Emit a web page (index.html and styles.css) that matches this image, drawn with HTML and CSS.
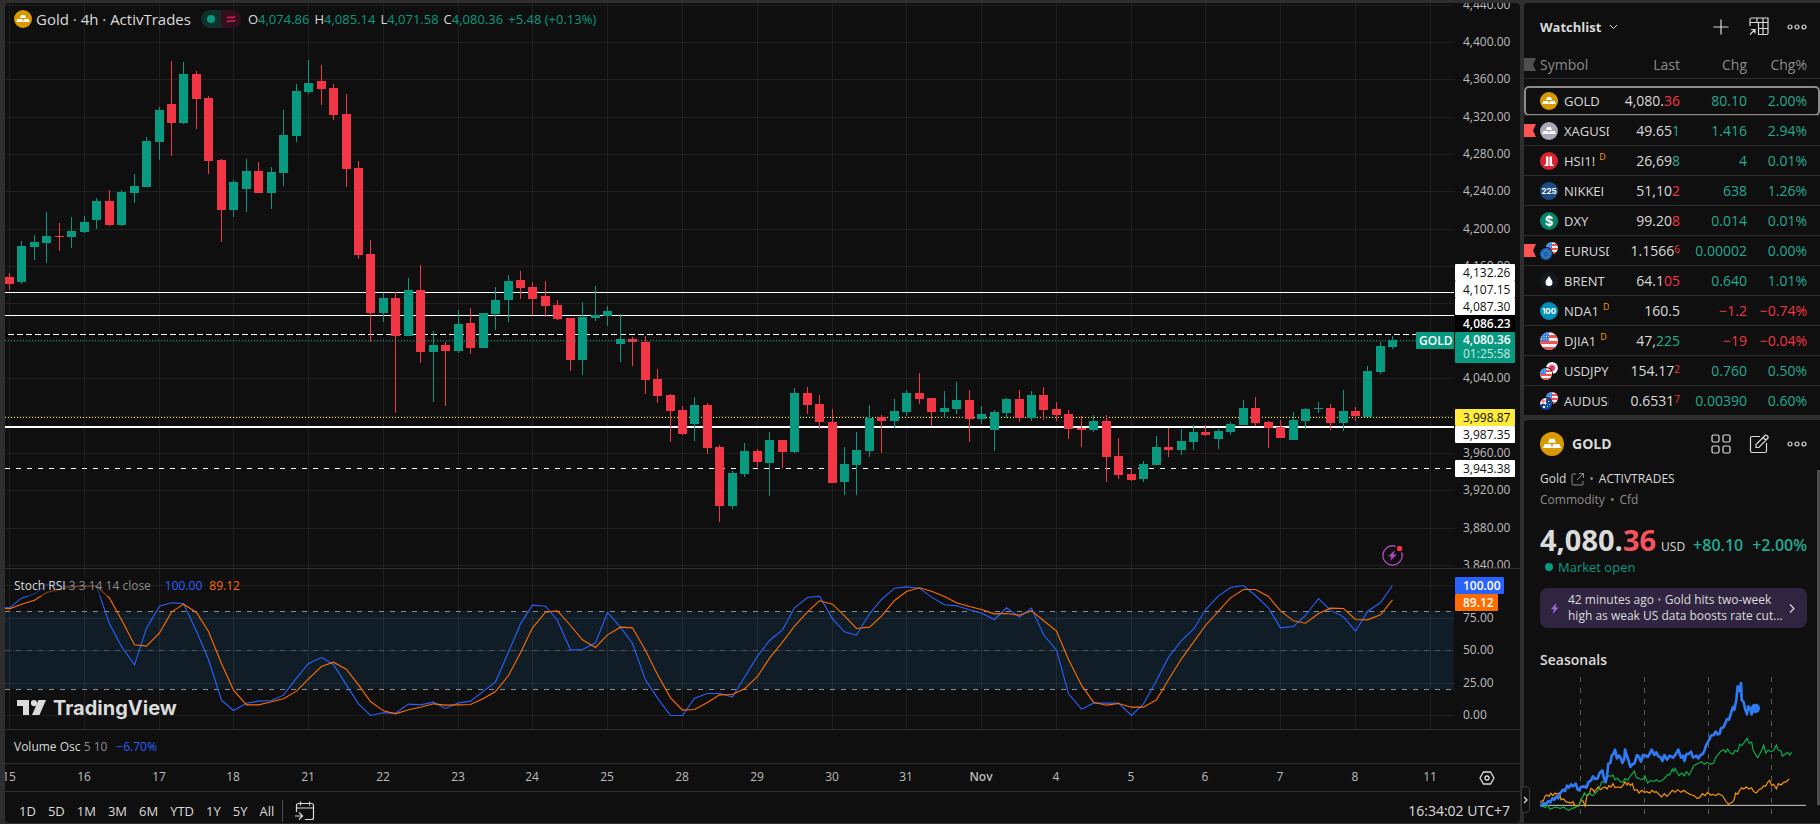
FILE: index.html
```html
<!DOCTYPE html>
<html lang="en">
<head>
<meta charset="utf-8">
<title>Gold · 4h · ActivTrades</title>
<link rel="stylesheet" href="styles.css">
</head>
<body>
<svg class="sprite" aria-hidden="true">
  <symbol id="bars-icon" viewBox="0 0 18 18"><path fill="#fff" d="M7.200 5h3.600l1.200 3H6zM3.400 9h4.700l1 3H2.200zM9.900 9h4.700l1.200 3H8.900z"/></symbol>
  <symbol id="us-flag" viewBox="0 0 18 18"><path fill="#f2f3f5" d="M0 0h18v18H0z"/><path fill="#ef5350" d="M9 3h9v3H9zM9 0h9v1H9zM0 9h18v3H0zM0 15h18v3H0z"/><path fill="#2f7de1" d="M0 0h9v9H0z"/><path stroke="#e3f2fd" stroke-dasharray="1 1.500" d="M1 2h8M1 4.500h8M1 7h8"/></symbol>
  <symbol id="more-icon" viewBox="0 0 20 8"><g fill="none" stroke="currentColor" stroke-width="1.200"><circle cx="3" cy="4" r="2"/><circle cx="10" cy="4" r="2"/><circle cx="17" cy="4" r="2"/></g></symbol>
</svg>
<div class="app">
  <main class="chart">
    <section class="pane pane-price" aria-label="Price">
      <div class="plot">
        <svg class="canvas" id="price-plot"></svg>
        <div class="legend legend-main">
          <svg class="coin coin-gold" width="18" height="18"><use href="#bars-icon"/></svg>
          <h1 class="title">Gold · 4h · ActivTrades</h1>
          <span class="status"><span class="status-open"><i class="dot"></i></span><span class="status-delay"><svg width="10" height="9" viewBox="0 0 10 9"><path fill="none" stroke="currentColor" stroke-width="1.300" d="M1 3.200C3 .2 6 4.400 9 1.500M1 7C3 4 6 8.200 9 5.300"/></svg></span></span>
          <span class="ohlc"><span>O<b>4,074.86</b></span><span>H<b>4,085.14</b></span><span>L<b>4,071.58</b></span><span>C<b>4,080.36</b></span><b>+5.48 (+0.13%)</b></span>
        </div>
      </div>
      <svg class="axis" id="price-axis"></svg>
    </section>
    <section class="pane pane-stoch" aria-label="Stoch RSI">
      <div class="plot">
        <svg class="canvas" id="stoch-plot"></svg>
        <div class="legend legend-study"><span>Stoch RSI <small>3 3 14 14 close</small></span><span class="blue">100.00</span><span class="orange">89.12</span></div>
        <div class="brand"><svg width="30" height="16" viewBox="0 0 30 16"><path fill="currentColor" d="M0 0h12v15H6V6H0zM21.500 0H29l-6.500 15H15z"/><circle cx="17" cy="3.100" r="3.100" fill="currentColor"/></svg>TradingView</div>
      </div>
      <svg class="axis" id="stoch-axis"></svg>
    </section>
    <section class="pane pane-volume" aria-label="Volume Osc">
      <div class="legend-volume"><span>Volume Osc <small>5 10</small></span><span class="blue">−6.70%</span></div>
    </section>
    <section class="pane pane-time" aria-label="Time axis">
      <div class="plot"><svg class="canvas" id="time-axis"></svg></div>
      <div class="axis axis-tools"><button class="icon" aria-label="Settings"><svg width="16" height="14" viewBox="0 0 16 14"><g fill="none" stroke="currentColor" stroke-width="1.300"><path d="M4.500 1h7L15 7l-3.500 6h-7L1 7z"/><circle cx="8" cy="7" r="2"/></g></svg></button></div>
    </section>
    <footer class="footer">
      <nav class="ranges" aria-label="Date range">
        <button>1D</button><button>5D</button><button>1M</button><button>3M</button><button>6M</button><button>YTD</button><button>1Y</button><button>5Y</button><button>All</button>
      </nav>
      <button class="icon goto" aria-label="Go to date"><svg width="20" height="20" viewBox="0 0 20 20"><path fill="none" stroke="currentColor" stroke-width="1.200" d="M1.500 11V4.500a2 2 0 0 1 2-2h13a2 2 0 0 1 2 2v12a2 2 0 0 1-2 2H10M1.500 7h17M5.500.5v4M14.500.5v4M0 15h7M4 11.500 7.500 15 4 18.500"/></svg></button>
      <button class="clock">16:34:02 UTC+7</button>
    </footer>
  </main>

  <aside class="side">
    <button class="collapse" aria-label="Collapse panel"><svg width="5" height="8" viewBox="0 0 5 8"><path fill="none" stroke="currentColor" stroke-width="1.300" d="M1 1l3 3-3 3"/></svg></button>
    <section class="card">
      <header class="bar">
        <button class="list-name">Watchlist <svg width="9" height="6" viewBox="0 0 9 6"><path fill="none" stroke="currentColor" d="M1 1l3.500 3.500L8 1"/></svg></button>
        <button class="icon" aria-label="Add symbol"><svg width="16" height="16" viewBox="0 0 16 16"><path stroke="currentColor" stroke-width="1.200" d="M8 .5v15M.5 8h15"/></svg></button>
        <button class="icon" aria-label="Table view"><svg width="20" height="19" viewBox="0 0 20 19"><path fill="none" stroke="currentColor" stroke-width="1.200" d="M1 9V2.500A1.500 1.500 0 0 1 2.500 1H19v15a1.500 1.500 0 0 1-1.500 1.500H9.500V5.500M1 5.500h18M14 5.500v12M9.500 11.500H19M8 1v4.500M14 1v4.500M1 17.500l5-5M2 12.500h4v4"/></svg></button>
        <button class="icon" aria-label="More"><svg width="20" height="8"><use href="#more-icon"/></svg></button>
      </header>
      <table class="list">
        <thead><tr><th class="sym"><i class="flag flag-off"></i>Symbol</th><th>Last</th><th>Chg</th><th>Chg%</th></tr></thead>
        <tbody>
          <tr class="selected"><td class="sym"><span class="cell"><svg class="coin coin-gold" width="18" height="18"><use href="#bars-icon"/></svg><span class="tick">GOLD</span></span></td><td>4,080.<em class="dn">36</em></td><td class="up">80.10</td><td class="up">2.00%</td></tr>
          <tr><td class="sym"><i class="flag"></i><span class="cell"><svg class="coin coin-silver" width="18" height="18"><use href="#bars-icon"/></svg><span class="tick">XAGUSD</span></span></td><td>49.65<em class="up">1</em></td><td class="up">1.416</td><td class="up">2.94%</td></tr>
          <tr><td class="sym"><span class="cell"><svg class="coin coin-red" width="18" height="18" viewBox="0 0 18 18"><path fill="#fff" d="M6 4.500h2.500v9.500H4l2-2.500zM9.500 4.500H12v7l2 2.500H9.500z"/></svg><span class="tick">HSI1!<sup>D</sup></span></span></td><td>26,69<em class="up">8</em></td><td class="up">4</td><td class="up">0.01%</td></tr>
          <tr><td class="sym"><span class="cell"><span class="coin coin-navy">225</span><span class="tick">NIKKEI</span></span></td><td>51,10<em class="dn">2</em></td><td class="up">638</td><td class="up">1.26%</td></tr>
          <tr><td class="sym"><span class="cell"><span class="coin coin-green">$</span><span class="tick">DXY</span></span></td><td>99.20<em class="dn">8</em></td><td class="up">0.014</td><td class="up">0.01%</td></tr>
          <tr><td class="sym"><i class="flag"></i><span class="cell"><span class="pair"><svg class="coin back" width="12" height="12"><use href="#us-flag"/></svg><svg class="coin front" width="12" height="12" viewBox="0 0 12 12"><path fill="#1565c0" d="M0 0h12v12H0z"/><circle cx="6" cy="6" r="3.500" fill="none" stroke="#ffd54f" stroke-dasharray="1 1.750"/></svg></span><span class="tick">EURUSD</span></span></td><td>1.1566<em class="dn pip">6</em></td><td class="up">0.00002</td><td class="up">0.00%</td></tr>
          <tr><td class="sym"><span class="cell"><svg class="coin coin-black" width="18" height="18" viewBox="0 0 18 18"><path fill="#fff" d="M9 4c2 3 3.500 4.500 3.500 6.500a3.500 3.500 0 0 1-7 0C5.500 8.500 7 7 9 4z"/></svg><span class="tick">BRENT</span></span></td><td>64.1<em class="dn">05</em></td><td class="up">0.640</td><td class="up">1.01%</td></tr>
          <tr><td class="sym"><span class="cell"><span class="coin coin-cyan">100</span><span class="tick">NDA1<sup>D</sup></span></span></td><td>160.5</td><td class="dn">−1.2</td><td class="dn">−0.74%</td></tr>
          <tr><td class="sym"><span class="cell"><svg class="coin" width="18" height="18"><use href="#us-flag"/></svg><span class="tick">DJIA1<sup>D</sup></span></span></td><td>47,<em class="up">225</em></td><td class="dn">−19</td><td class="dn">−0.04%</td></tr>
          <tr><td class="sym"><span class="cell"><span class="pair"><svg class="coin back" width="12" height="12" viewBox="0 0 12 12"><path fill="#eceff1" d="M0 0h12v12H0z"/><circle cx="6" cy="6" r="3" fill="#f23655"/></svg><svg class="coin front" width="12" height="12"><use href="#us-flag"/></svg></span><span class="tick">USDJPY</span></span></td><td>154.17<em class="dn pip">2</em></td><td class="up">0.760</td><td class="up">0.50%</td></tr>
          <tr><td class="sym"><span class="cell"><span class="pair"><svg class="coin back" width="12" height="12"><use href="#us-flag"/></svg><svg class="coin front" width="12" height="12" viewBox="0 0 12 12"><path fill="#0d47a1" d="M0 0h12v12H0z"/><path stroke="#fff" stroke-width="2" d="M0 0l6 6M6 0L0 6M3 0v6M0 3h6"/><path stroke="#ef5350" d="M3 0v6M0 3h6"/><path fill="#fff" d="M8 3h1v1H8zM9 6h1v1H9zM7 8h1v1H7zM3 8h2v2H3z"/></svg></span><span class="tick">AUDUSD</span></span></td><td>0.6531<em class="dn pip">7</em></td><td class="up">0.00390</td><td class="up">0.60%</td></tr>
        </tbody>
      </table>
    </section>

    <section class="card details">
      <div class="scroll"></div>
      <header class="bar">
        <svg class="coin coin-gold" width="24" height="24"><use href="#bars-icon"/></svg>
        <h2 class="name">GOLD</h2>
        <button class="icon" aria-label="Widgets"><svg width="20" height="20" viewBox="0 0 20 20"><g fill="none" stroke="currentColor" stroke-width="1.200"><rect x="1" y="1" width="7" height="7" rx="1.500"/><rect x="12" y="1" width="7" height="7" rx="1.500"/><rect x="1" y="12" width="7" height="7" rx="1.500"/><rect x="12" y="12" width="7" height="7" rx="1.500"/></g></svg></button>
        <button class="icon" aria-label="Edit note"><svg width="20" height="20" viewBox="0 0 20 20"><g fill="none" stroke="currentColor" stroke-width="1.200"><path d="M11 2.500H3A1.500 1.500 0 0 0 1.500 4v13A1.500 1.500 0 0 0 3 18.500h13a1.500 1.500 0 0 0 1.500-1.500V9"/><path d="M7 13.500V10.500L16 1.500a1.400 1.400 0 0 1 2 0l.8.8a1.400 1.400 0 0 1 0 2l-9 9.200zM14 3.500l3 3"/></g></svg></button>
        <button class="icon" aria-label="More"><svg width="20" height="8"><use href="#more-icon"/></svg></button>
      </header>
      <p class="meta"><span>Gold</span><a class="ext" href="#gold" aria-label="Open Gold"><svg width="13" height="13" viewBox="0 0 13 13"><path fill="none" stroke="currentColor" d="M5 1H2a1 1 0 0 0-1 1v9a1 1 0 0 0 1 1h9a1 1 0 0 0 1-1V8M8 .5h4.500V5M12.500.5 6 7"/></svg></a><span class="bullet">•</span><span>ACTIVTRADES</span></p>
      <p class="meta muted"><span>Commodity</span><span class="bullet">•</span><span>Cfd</span></p>
      <p class="quote"><span class="price">4,080.<em>36</em></span><span class="cur">USD</span><span class="delta">+80.10</span><span class="delta pct">+2.00%</span></p>
      <p class="market"><i class="dot"></i>Market open</p>
      <button class="news">
        <svg width="9" height="11" viewBox="0 0 9 11"><path fill="#9c6ade" d="M6.500 0 1 6h3L2.500 11 8.500 4.500h-3z"/></svg>
        <span class="news-text">42 minutes ago <span class="bullet">•</span> Gold hits two-week high as weak US data boosts rate cut...</span>
        <svg width="6" height="9" viewBox="0 0 6 9"><path fill="none" stroke="currentColor" stroke-width="1.200" d="M1 .5l4 4-4 4"/></svg>
      </button>
      <h3 class="subhead">Seasonals</h3>
      <svg class="seasonals" viewBox="75 144 798 414">
        <g fill="none">
          <path stroke="#5a5a5a" stroke-width="3" stroke-dasharray="15 18" d="M196.500 144v414M388.500 144v414M580.500 144v414M769.500 144v414"/>
          <path stroke="#d0d0d0" stroke-width="3" d="M75 529h798"/>
          <polyline stroke="#ff9800" stroke-width="3.500" points="75,522 80,516 85,515 90,502 96,498 102,502 108,493 114,500 120,492 126,496 134,491 138,512 146,510 152,518 160,520 168,522 174,518 180,530 190,532 198,514 204,516 210,531 216,500 222,496 228,478 234,482 238,490 244,480 250,474 256,482 264,476 270,474 276,480 282,470 288,474 294,464 300,476 308,474 318,476 326,466 330,458 336,468 340,462 346,470 352,464 358,484 366,482 372,492 380,484 388,490 396,488 404,492 412,484 418,490 424,488 432,496 440,504 448,494 456,502 464,494 472,484 480,490 488,482 498,490 506,484 514,490 522,494 530,498 538,500 546,508 554,506 562,494 570,500 578,490 586,498 594,496 602,500 610,494 618,498 624,502 632,516 640,526 646,522 652,520 658,510 662,492 668,496 674,484 680,476 686,480 694,474 702,480 710,476 716,488 724,492 732,482 740,478 746,470 752,472 758,460 764,454 770,470 776,466 784,480 790,464 798,468 806,460 814,458 822,450"/>
          <polyline stroke="#0cae4a" stroke-width="3.500" points="75,532 84,532 90,536 98,528 104,540 112,538 120,534 128,536 136,538 146,534 154,540 162,544 170,538 180,536 190,530 196,520 202,506 208,492 214,500 224,492 232,500 240,494 248,486 254,474 260,458 266,460 272,452 276,446 282,440 288,442 294,438 300,452 308,448 316,458 324,460 330,448 338,454 344,444 352,434 358,426 364,446 370,448 380,452 386,448 390,440 398,462 408,454 416,458 424,452 432,458 442,454 452,444 458,436 464,438 472,420 476,428 480,418 486,430 492,440 500,432 508,440 514,428 522,438 530,424 536,410 544,406 552,402 560,398 568,406 576,400 586,406 596,402 602,386 610,376 618,366 626,362 632,370 638,360 646,372 654,376 660,364 668,368 674,346 680,350 688,340 696,328 702,342 710,340 714,362 720,374 728,386 734,376 740,364 746,348 752,372 760,364 768,368 776,364 784,348 790,364 798,366 802,382 810,376 818,370 824,378 830,370"/>
          <polyline stroke="#2f7bf6" stroke-width="8" stroke-linejoin="round" points="76,532 86,522 92,526 100,516 106,520 112,508 118,512 124,502 130,508 136,492 144,482 150,486 156,470 162,476 168,466 174,472 182,464 188,482 192,484 198,474 208,472 214,476 220,460 228,454 234,442 240,450 248,448 254,432 262,424 266,444 272,460 276,440 280,404 286,402 290,380 296,374 300,362 306,388 312,380 318,388 322,402 328,390 330,362 334,376 340,392 346,414 352,406 358,404 366,378 372,384 378,398 384,378 392,380 398,384 404,374 410,362 418,378 424,370 430,382 436,384 442,396 448,378 456,392 464,380 474,386 482,376 490,362 498,386 504,380 508,396 514,376 522,374 528,368 534,386 544,380 550,388 556,378 562,376 568,366 572,352 578,340 584,330 588,320 596,318 602,308 608,316 614,314 618,298 626,294 632,280 636,270 642,272 648,252 654,234 658,242 664,212 668,172 674,186 678,162 680,212 686,220 690,238 696,256 700,232 706,240 710,256 714,240 722,238"/>
          <circle cx="721" cy="238" r="14" fill="#2f7bf6"/>
        </g>
      </svg>
    </section>
  </aside>
</div>
<script src="chart.js"></script>
</body>
</html>
```
FILE: styles.css
```css
:root {
  --bg: #0f0f0f;
  --gap: #2e2e2e;
  --text: #dbdbdb;
  --muted: #8c8c8c;
  --green: #089981;
  --red: #f23645;
  --blue: #2962ff;
  --orange: #ff6d00;
}
* { box-sizing: border-box; }
html, body { height: 100%; }
body {
  margin: 0;
  background: var(--gap);
  color: var(--text);
  font: 14px/20px "Trebuchet MS", "Open Sans", "Noto Sans", sans-serif;
}
h1, h2, h3, p { margin: 0; font-size: inherit; font-weight: inherit; }
button { padding: 0; border: 0; background: none; color: inherit; font: inherit; cursor: pointer; }
em, i { font-style: normal; }
svg { display: block; }
.sprite { position: absolute; width: 0; height: 0; }
.app { display: grid; grid-template-columns: minmax(0, 1fr) 296px; gap: 4px; min-height: 100vh; padding: 3px 0 1px 5px; }

/* chart */
.chart { display: flex; flex-direction: column; min-width: 0; background: var(--bg); border-radius: 4px; overflow: hidden; }
.pane { display: flex; flex: none; border-bottom: 1px solid var(--gap); }
.pane-price { flex: 1; }
.pane-stoch { height: 161px; }
.pane-volume { height: 34px; align-items: center; }
.pane-time { height: 28px; }
.plot { position: relative; flex: 1; min-width: 0; overflow: hidden; }
.canvas { position: absolute; inset: 0; width: 100%; height: 100%; }
.axis { flex: none; width: 66px; height: auto; overflow: hidden; }
.axis-tools { display: grid; place-items: center; }
.tick-label { fill: #bdbdbd; font-size: 12px; }
.tag-label { font-size: 12px; }
.bold { font-weight: 600; }

.legend { position: absolute; left: 9px; display: flex; align-items: center; white-space: nowrap; }
.legend-main { top: 6px; }
.title { margin-left: 4px; font-size: 15px; }
.status { display: flex; width: 40px; height: 18px; margin: 0 7px 0 10px; border-radius: 9px; overflow: hidden; }
.status span { flex: 1; display: grid; place-items: center; }
.status-open { background: #10302c; }
.status-delay { background: #34101f; color: #e91e63; }
.dot { width: 8px; height: 8px; border-radius: 50%; background: var(--green); }
.ohlc { display: flex; gap: 5px; font-size: 13px; }
.ohlc b { color: var(--green); font-weight: 400; }
.legend-study { top: 7px; gap: 7px; font-size: 12px; }
.legend-study > span:first-child { margin-right: 7px; background: rgba(15, 15, 15, .5); }
small { color: var(--muted); font-size: inherit; }
.blue { color: var(--blue); }
.orange { color: var(--orange); }
.legend-volume { display: flex; gap: 9px; padding-left: 9px; font-size: 12px; }
.brand { position: absolute; left: 12px; bottom: 9px; display: flex; align-items: center; gap: 6px; font: 700 20px/24px Inter, sans-serif; }

.footer { display: flex; flex: none; align-items: center; height: 31px; padding: 7px 10px 0 14px; }
.ranges { display: flex; gap: 12px; padding-right: 8px; border-right: 1px solid #4a4a4a; font-size: 13px; line-height: 22px; }
.goto { margin-left: 12px; }
.clock { margin-left: auto; }

/* right column */
.side { position: relative; display: flex; flex-direction: column; gap: 5px; min-width: 0; }
.card { background: var(--bg); border-radius: 4px 0 0 0; }
.bar { display: flex; align-items: center; gap: 18px; height: 47px; padding: 0 13px 0 16px; }
.bar .icon { display: grid; place-items: center; width: 20px; height: 20px; }
.list-name { display: flex; align-items: center; gap: 8px; margin-right: auto; font-size: 13px; font-weight: 700; }
.list { width: 100%; table-layout: fixed; border-collapse: separate; border-spacing: 0; }
.list th, .list td { position: relative; height: 30px; padding: 0; border-bottom: 1px solid var(--gap); text-align: right; font-weight: 400; line-height: 20px; }
.list th { height: 29px; padding-top: 2px; color: var(--muted); }
.list th.sym, .list td.sym { width: 84px; padding-left: 16px; text-align: left; }
.list th:nth-child(2) { width: 72px; }
.list th:nth-child(3) { width: 67px; }
.list th:last-child, .list td:last-child { padding-right: 13px; }
.list tbody::before { content: ""; display: block; height: 7px; }
.list tbody tr:last-child td { height: 29px; border-bottom: 0; }
.selected { outline: 2px solid var(--muted); outline-offset: -2px; border-radius: 5px; }
.flag { position: absolute; left: 0; top: 8px; width: 12px; height: 13px; background: #ff5252; clip-path: polygon(0 0, 100% 0, 75% 50%, 100% 100%, 0 100%); }
.flag-off { background: #4f4f4f; }
.cell { display: flex; align-items: center; gap: 6px; }
.tick { width: 45px; flex: none; overflow: hidden; font-size: 13px; white-space: nowrap; }
.tick sup { margin-left: 4px; color: #ff9800; font-size: 9px; line-height: 9px; }
.coin { flex: none; display: grid; place-items: center; border-radius: 50%; overflow: hidden; }
span.coin { width: 18px; height: 18px; color: #fff; font: 700 8px/18px Inter, sans-serif; }
.coin-gold { background: #d99a00; }
.coin-silver { background: #a9a8b8; }
.coin-red { background: #dc2430; }
.coin-navy { background: #1d4c86; }
span.coin-green { background: #06826b; font-size: 13px; }
.coin-black { background: #17191f; }
.coin-cyan { background: #0090bb; }
.pair { position: relative; flex: none; width: 18px; height: 18px; }
.pair .coin { position: absolute; }
.pair .back { top: 0; right: 0; }
.pair .front { bottom: 0; left: 0; box-shadow: 0 0 0 1px var(--bg); }
.up { color: #22ab94; }
.dn { color: var(--red); }
.pip { font-size: 10px; line-height: 10px; vertical-align: 3px; }

/* symbol details */
.details { position: relative; flex: 1; padding-bottom: 6px; }
.details .coin { width: 24px; height: 24px; }
.details .name { margin: 0 auto 0 -10px; font-weight: 700; }
.scroll { position: absolute; top: 50px; right: 0; bottom: 18px; width: 3px; background: #4d4d4d; }
.meta { display: flex; align-items: center; gap: 5px; padding: 2px 16px 0; font-size: 12px; line-height: 20px; }
.meta + .meta { padding-top: 1px; }
.ext { color: var(--muted); }
.bullet { color: var(--muted); }
.muted { color: var(--muted); }
.quote { display: flex; align-items: baseline; padding: 10px 13px 0 16px; white-space: nowrap; }
.price { font-size: 29px; line-height: 40px; font-weight: 700; }
.price em { color: #f7525f; }
.cur { margin-left: 5px; font-size: 12px; }
.delta { margin-left: auto; color: #22ab94; font-size: 16px; line-height: 20px; font-weight: 600; }
.pct { margin-left: 9px; }
.market { display: flex; align-items: center; gap: 5px; margin-top: -3px; padding-left: 21px; color: var(--green); font-size: 13px; line-height: 20px; }
.news { display: grid; grid-template-columns: 9px 1fr 6px; align-items: center; width: calc(100% - 29px); height: 40px; margin: 11px 13px 0 16px; padding: 0 12px 0 10px; border-radius: 8px; background: #302540; text-align: left; font-size: 12px; line-height: 16px; }
.news-text { padding-left: 9px; }
.subhead { margin: 22px 0 7px 16px; font-weight: 600; }
.seasonals { display: block; width: calc(100% - 30px); margin-left: 16px; }
.collapse { position: absolute; z-index: 1; left: -3px; bottom: 10px; display: grid; place-items: center; width: 9px; height: 27px; border: 1px solid #3a3a3a; border-radius: 4px; background: var(--bg); }
```
FILE: chart.js
```js
// Candles: direction, high, low, body top, body bottom (pane units, 3 = top edge)
const candles = `r273,290,277,284 g241,284,246,282 g235,260,242,247 g212,263,236,243 r223,251,236,237 g217,248,231,237
g216,233,222,232 g198,229,201,220 r190,226,201,225 g190,226,192,225 g174,203,186,193 g137,187,141,187
g107,160,110,142 r61,156,104,123 g62,124,74,123 r71,129,74,99 r96,174,98,161 r159,242,160,210
g180,217,182,210 g159,212,171,189 r162,193,171,193 g167,209,172,193 g110,186,135,173 g84,142,91,136
g60,94,83,92 r65,105,81,89 r84,120,88,115 r94,187,114,169 r161,259,168,255 r240,342,254,313
g293,322,298,313 r292,413,298,336 g278,336,290,336 r265,363,290,352 g331,402,345,352 r342,406,345,351
g310,353,324,351 r308,354,323,348 g313,348,313,348 g287,330,300,314 g275,322,281,300 r271,299,280,288
r282,315,287,299 r281,317,296,306 r300,320,305,319 r318,371,318,360 g302,375,317,360 g286,321,315,318
g306,326,311,316 g314,362,339,344 r337,366,339,342 r336,394,342,380 r369,403,379,396 r394,442,395,411
r406,435,410,434 g397,441,405,424 r403,454,405,448 r445,522,447,506 g471,509,473,506 g443,477,451,474
r449,467,451,462 g432,496,440,463 r440,468,440,452 g388,453,393,452 r387,414,393,405 r395,429,404,422
r409,483,422,483 g447,495,464,482 g432,495,450,465 g405,457,418,451 r415,453,417,421 g399,428,411,421
g390,416,393,412 r373,404,393,399 r398,426,398,412 g391,418,408,412 g382,414,400,409 r390,442,400,419
g406,424,414,419 g410,451,412,430 g398,418,399,413 r390,422,399,418 g391,421,395,418 r387,420,395,410
r402,421,409,415 r410,439,414,429 r416,447,428,430 g415,432,421,430 r415,482,421,457 r438,479,456,475
r468,481,474,480 g461,482,464,479 g436,465,447,465 r428,457,447,450 g429,455,441,450 g425,450,432,442
r425,436,432,435 g429,449,431,439 g422,435,424,432 g400,425,408,425 r397,426,408,423 r421,448,422,428
r420,438,427,438 g412,440,420,440 g408,429,409,421 g402,413,408,409 r404,430,408,423 g390,431,411,423
r407,421,411,416 g366,417,371,417 g342,374,346,372 g336,349,340,347`.split(/\s+/)
  .map(s => [s[0] === 'g', ...s.slice(1).split(',').map(Number)]);

// Stochastic lines, 465 = 0 and 75 = 100
const kLine = [142,113,100,73,77,77,77,77,190,258,313,203,137,127,129,212,297,419,450,428,422,420,404,353,309,291,312,374,430,465,457,458,431,433,425,444,427,422,392,364,275,190,134,137,180,268,267,247,156,200,249,358,413,465,465,413,399,399,409,350,287,240,208,142,111,107,175,214,224,160,117,83,79,83,110,133,136,148,158,177,142,170,143,222,269,400,446,428,428,428,465,430,360,290,240,206,148,106,81,75,105,143,202,198,165,114,149,169,212,153,126,75];
const dLine = [145,131,119,96,87,79,77,77,113,178,253,257,217,155,131,156,213,309,389,433,433,424,415,392,355,318,305,327,373,423,451,460,448,440,430,434,433,432,414,393,345,277,202,155,151,195,238,261,223,200,202,270,342,412,449,447,426,403,402,385,348,293,245,197,154,121,131,166,204,200,167,120,93,82,92,108,127,138,147,160,159,164,151,180,212,297,374,425,434,429,440,440,418,358,295,245,195,152,112,87,87,108,151,181,188,159,143,144,177,178,163,118];

const days = ['15','16','17','18','21','22','23','24','25','28','29','30','31','Nov','4','5','6','7','8','11'];
const GREEN = '#089981', RED = '#f23645';
const byId = id => document.getElementById(id);
const barX = (i, shift) => Math.round(4 + 12.463 * i + shift);
const rect = (x, y, w, h, fill, extra = '') => `<rect x="${x}" y="${y}" width="${w}" height="${h}" fill="${fill}" ${extra}/>`;
const hline = (y, w, color, dash = '', size = 1, x = 0) => `<path d="M${x} ${y + size / 2}H${w}" stroke="${color}" stroke-width="${size}" stroke-dasharray="${dash}"/>`;
const text = (x, y, value, cls, fill = '') => `<text x="${x}" y="${y}" class="${cls}"${fill && ` fill="${fill}"`}>${value}</text>`;
const dayLines = (shift, h) => days.map((d, n) => rect(barX(n * 6, shift), 0, 1, h, '#1f1f1f')).join('');

function drawPrice(svg, axis) {
  const w = svg.clientWidth, h = svg.clientHeight, shift = w - 1449;
  const top = 3;
  let out = dayLines(shift, h), ticks = '';
  for (let n = 0; n < 16; n++) {
    const y = Math.floor(5.1 + 37.36 * n) - top;
    out += rect(0, y, w, 1, '#1f1f1f');
    const price = (4440 - 40 * n).toLocaleString('en-US') + '.00';
    if (![8, 9, 11].includes(n)) ticks += text(9, y + 4, price, 'tick-label');
  }
  out += hline(289, w, '#fff') + hline(312, w, '#fff');
  out += hline(331, w, '#000', '3 6', 3) + hline(331, w, '#fff', '6 3', 1, 3);
  out += hline(414, w, '#ffeb3b', '1 2') + hline(423, w, '#fff', '', 2) + hline(465, w, '#fff', '5 6');
  candles.forEach(([up, hi, lo, a, b], i) => {
    const x = barX(i, shift), c = up ? GREEN : RED;
    out += rect(x, hi - top, 1, lo - hi, c) + rect(x - 4, a - top, 9, b - a, c);
  });
  out += hline(337, w, GREEN, '1 2');
  out += rect(w - 38, 329, 38, 17, GREEN, 'rx="1"');
  svg.innerHTML = `<g shape-rendering="crispEdges">${out}</g>`
    + text(w - 35, 342, 'GOLD', 'tag-label bold', '#fff')
    + `<g transform="translate(${barX(111, shift) + 0.5} 552.5)" fill="none"><circle r="9.700" stroke="#ab47bc" stroke-width="1.400"/><path fill="#ab47bc" d="M2.500-5.500-4.500 1h3.300L-2.500 5.500 4.500-1H1z"/><circle cx="7" cy="-7" r="4.500" fill="#0f0f0f"/><circle cx="7" cy="-7" r="2.700" fill="#f23645"/></g>`;
  const tag = (y, value, bg, fg, cls = '') => rect(1, y, 60, 17, bg, 'rx="1"') + text(9, y + 13, value, 'tag-label ' + cls, fg);
  axis.innerHTML = ticks
    + tag(261, '4,132.26', '#fff', '#0f0f0f') + tag(278, '4,107.15', '#fff', '#0f0f0f') + tag(295, '4,087.30', '#fff', '#0f0f0f')
    + tag(312, '4,086.23', '#000', '#fff', 'bold')
    + rect(1, 329, 60, 31, GREEN, 'rx="1"') + text(9, 341, '4,080.36', 'tag-label bold', '#fff') + text(9, 355, '01:25:58', 'tag-label', '#c9e8e3')
    + tag(406, '3,998.87', '#ffeb3b', '#0f0f0f') + tag(423, '3,987.35', '#fff', '#0f0f0f') + tag(457, '3,943.38', '#fff', '#0f0f0f');
}

function drawStoch(svg, axis) {
  const w = svg.clientWidth, h = svg.clientHeight, shift = w - 1449;
  const points = line => `-4,${(line[0] - 27) / 3} ` + line.map((v, i) => `${barX(i, shift) + 0.5},${(v - 25.5) / 3}`).join(' ');
  svg.innerHTML = `<g shape-rendering="crispEdges">${rect(0, 42, w, 78, '#111d26')}`
    + dayLines(shift, h).replaceAll('#1f1f1f', 'rgba(255,255,255,.07)')
    + [16, 49, 81, 114, 146].map(y => rect(0, y, w, 1, 'rgba(255,255,255,.07)')).join('')
    + hline(42, w, '#8a8f94', '5 6') + hline(81, w, '#4d565d', '5 6') + hline(120, w, '#8a8f94', '5 6') + '</g>'
    + `<g fill="none" stroke-width="1.100"><polyline stroke="#2962ff" points="${points(kLine)}"/><polyline stroke="#ff6d00" points="${points(dLine)}"/></g>`;
  axis.innerHTML = [[49, '75.00'], [81, '50.00'], [114, '25.00'], [146, '0.00']].map(([y, t]) => text(9, y + 4, t, 'tick-label')).join('')
    + rect(1, 8, 49, 17, '#2962ff', 'rx="1"') + text(9, 21, '100.00', 'tag-label bold', '#fff')
    + rect(1, 25, 43, 17, '#ff6d00', 'rx="1"') + text(9, 38, '89.12', 'tag-label bold', '#fff');
}

function drawTime(svg) {
  const shift = svg.clientWidth - 1449;
  svg.innerHTML = `<g text-anchor="middle">${days.map((d, n) => text(barX(n * 6, shift), 17, d, d === 'Nov' ? 'tick-label bold' : 'tick-label')).join('')}</g>`;
}

function draw() {
  drawPrice(byId('price-plot'), byId('price-axis'));
  drawStoch(byId('stoch-plot'), byId('stoch-axis'));
  drawTime(byId('time-axis'));
}
draw();
window.addEventListener('resize', draw);
```
